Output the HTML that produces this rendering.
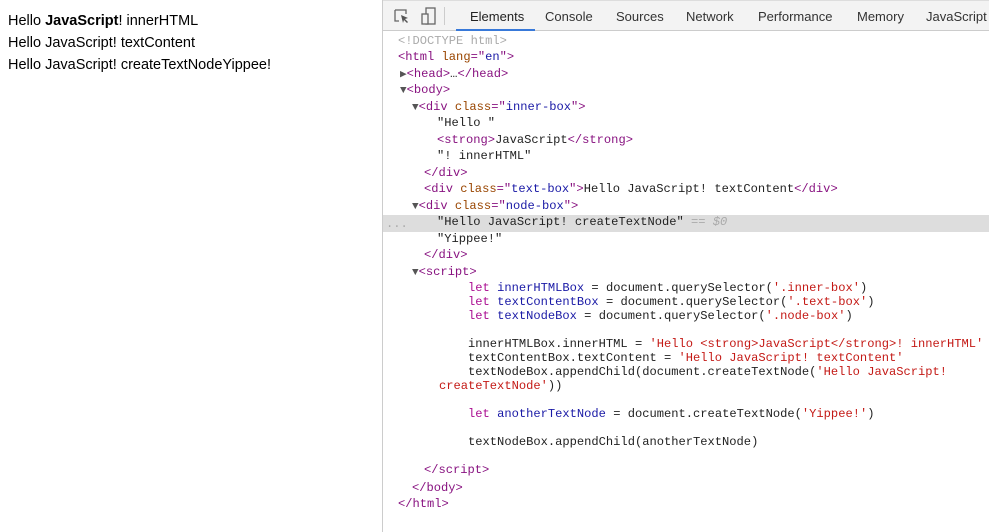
<!DOCTYPE html>
<html><head><style>
body{margin:0;width:989px;height:532px;overflow:hidden;font-family:"Liberation Sans",sans-serif;background:#fff;position:relative}
#left{position:absolute;left:0;top:0;width:382px;height:532px;border-right:1px solid #ccc;font-size:14.5px;color:#000}
#left div{position:absolute;left:8px}
#dt{position:absolute;left:383px;top:0;right:0;height:532px}
#tb{height:31px;background:#f3f3f3;border-bottom:1px solid #ccc;border-top:1px solid #ddd;box-sizing:border-box;position:relative;font-size:13px;color:#333}
#tb span{position:absolute;top:8px}
.ln{position:absolute;font-family:"Liberation Mono",monospace;font-size:12.1px;white-space:pre;color:#222;line-height:14px}
.t{color:#881280}.a{color:#994500}.v{color:#1a1aa6}.g{color:#aaa}.k{color:#aa0d91}.s{color:#c41a16}.n{color:#1c00cf}.d{color:#1a1aa6}
.tri{color:#555;font-size:11px}
</style></head><body>
<div id="left">
<div style="top:13px">Hello <b>JavaScript</b>! innerHTML</div>
<div style="top:35px">Hello JavaScript! textContent</div>
<div style="top:57px">Hello JavaScript! createTextNodeYippee!</div>
</div>
<div id="dt">
<div id="tb">
<svg style="position:absolute;left:10px;top:7px" width="18" height="18" viewBox="0 0 18 18"><path d="M2 2h11v4M2 2v11h4" fill="none" stroke="#666" stroke-width="1.3"/><path d="M8 7l7 3-3 1 3 3-1 1-3-3-1 3z" fill="#555"/></svg>
<svg style="position:absolute;left:38px;top:6px" width="16" height="19" viewBox="0 0 16 19"><rect x="5" y="1" width="9" height="16" fill="none" stroke="#666" stroke-width="1.3"/><rect x="1" y="7" width="6" height="10" fill="#f3f3f3" stroke="#666" stroke-width="1.3"/></svg>
<div style="position:absolute;left:61px;top:6px;width:1px;height:18px;background:#ccc"></div>
<span style="left:87px;color:#222">Elements</span>
<div style="position:absolute;left:73px;width:79px;top:28px;height:2px;background:#3879d9"></div>
<span style="left:162px">Console</span>
<span style="left:233px">Sources</span>
<span style="left:303px">Network</span>
<span style="left:375px">Performance</span>
<span style="left:474px">Memory</span>
<span style="left:543px">JavaScript</span>
</div>
<div style="position:absolute;left:0;right:0;top:215px;height:17px;background:#ddd"></div>
<div class="ln g" style="left:3px;top:217px">...</div>
<div class="ln g" style="left:15px;top:34px">&lt;!DOCTYPE html&gt;</div>
<div class="ln" style="left:15px;top:50px"><span class="t">&lt;html </span><span class="a">lang</span><span class="t">="</span><span class="v">en</span><span class="t">"&gt;</span></div>
<div class="ln" style="left:17px;top:67px"><span class="tri">▶</span><span class="t">&lt;head&gt;</span>…<span class="t">&lt;/head&gt;</span></div>
<div class="ln" style="left:17px;top:83px"><span class="tri">▼</span><span class="t">&lt;body&gt;</span></div>
<div class="ln" style="left:29px;top:100px"><span class="tri">▼</span><span class="t">&lt;div </span><span class="a">class</span><span class="t">="</span><span class="v">inner-box</span><span class="t">"&gt;</span></div>
<div class="ln" style="left:54px;top:116px">"Hello "</div>
<div class="ln" style="left:54px;top:133px"><span class="t">&lt;strong&gt;</span>JavaScript<span class="t">&lt;/strong&gt;</span></div>
<div class="ln" style="left:54px;top:149px">"! innerHTML"</div>
<div class="ln t" style="left:41px;top:166px">&lt;/div&gt;</div>
<div class="ln" style="left:41px;top:182px"><span class="t">&lt;div </span><span class="a">class</span><span class="t">="</span><span class="v">text-box</span><span class="t">"&gt;</span>Hello JavaScript! textContent<span class="t">&lt;/div&gt;</span></div>
<div class="ln" style="left:29px;top:199px"><span class="tri">▼</span><span class="t">&lt;div </span><span class="a">class</span><span class="t">="</span><span class="v">node-box</span><span class="t">"&gt;</span></div>
<div class="ln" style="left:54px;top:215px">"Hello JavaScript! createTextNode" <span class="g">== <i>$0</i></span></div>
<div class="ln" style="left:54px;top:232px">"Yippee!"</div>
<div class="ln t" style="left:41px;top:248px">&lt;/div&gt;</div>
<div class="ln" style="left:29px;top:265px"><span class="tri">▼</span><span class="t">&lt;script&gt;</span></div>
<div class="ln" style="left:56px;top:281px">    <span class="k">let</span> <span class="d">innerHTMLBox</span> = document.querySelector(<span class="s">'.inner-box'</span>)
    <span class="k">let</span> <span class="d">textContentBox</span> = document.querySelector(<span class="s">'.text-box'</span>)
    <span class="k">let</span> <span class="d">textNodeBox</span> = document.querySelector(<span class="s">'.node-box'</span>)

    innerHTMLBox.innerHTML = <span class="s">'Hello &lt;strong&gt;JavaScript&lt;/strong&gt;! innerHTML'</span>
    textContentBox.textContent = <span class="s">'Hello JavaScript! textContent'</span>
    textNodeBox.appendChild(document.createTextNode(<span class="s">'Hello JavaScript!</span>
<span class="s">createTextNode'</span>))

    <span class="k">let</span> <span class="d">anotherTextNode</span> = document.createTextNode(<span class="s">'Yippee!'</span>)

    textNodeBox.appendChild(anotherTextNode)

</div>
<div class="ln t" style="left:41px;top:463px">&lt;/script&gt;</div>
<div class="ln t" style="left:29px;top:481px">&lt;/body&gt;</div>
<div class="ln t" style="left:15px;top:497px">&lt;/html&gt;</div>
</div>
</body></html>
